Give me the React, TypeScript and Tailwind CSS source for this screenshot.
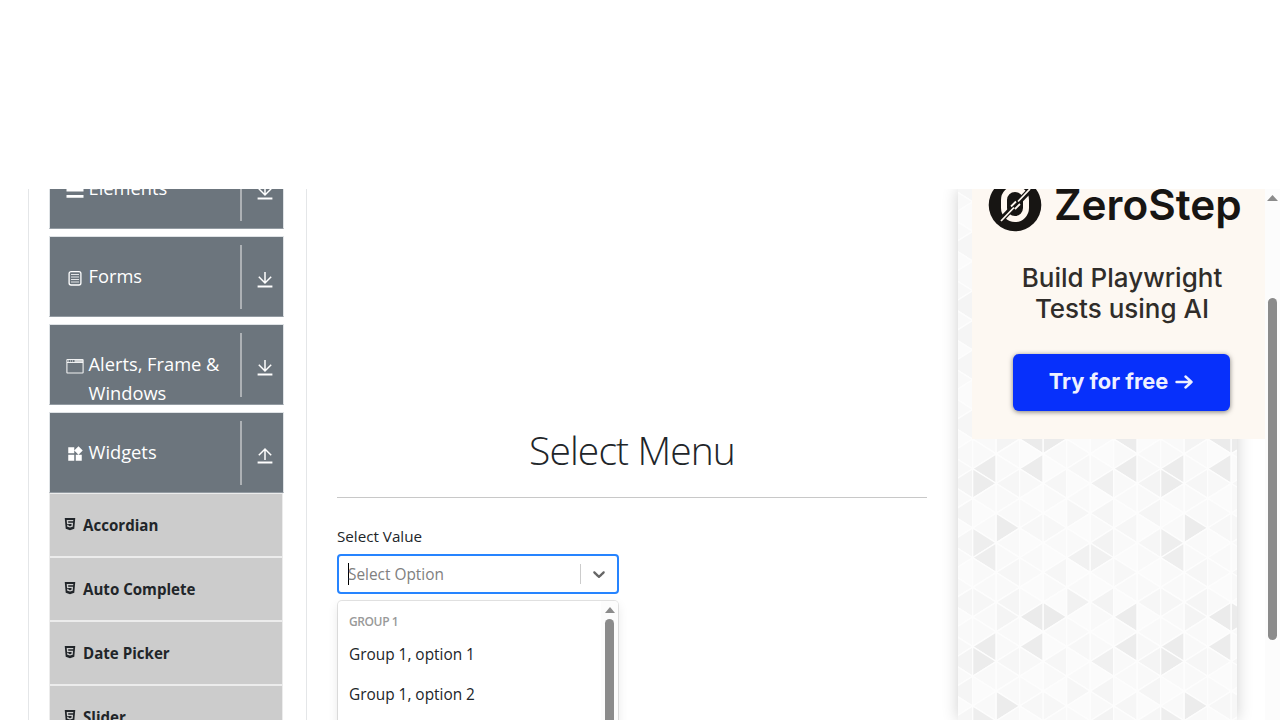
import React from "react";
import { MdWidgets } from "react-icons/md";
import { FaHtml5 } from "react-icons/fa";

function ElementsIcon() {
  return (
    <svg width="18" height="18" viewBox="0 0 18 18" fill="#fff">
      <path d="M.5 1.800h17v2.800H.5zM.5 7.800h17v2.800H.5zM.5 13.900h17v2.800H.5z" />
    </svg>
  );
}

function FormsIcon() {
  return (
    <svg width="18" height="18" viewBox="0 0 18 18" fill="none" stroke="#fff">
      <rect x="3.1" y="2.6" width="11.8" height="13.4" rx="2" strokeWidth="1.300" />
      <path d="M5 5.500h8M5 8h8M5 10.500h8M5 13h8" strokeWidth="1.200" opacity=".8" />
    </svg>
  );
}

function WindowIcon() {
  return (
    <svg width="18" height="18" viewBox="0 0 18 18" fill="none" stroke="#fff">
      <rect x=".9" y="2.500" width="16.200" height="13.500" rx=".6" strokeWidth="1.100" opacity=".9" />
      <path d="M1 5.500h16" strokeWidth="1" opacity=".9" />
      <path d="M2 4h1M4 4h1M6 4h1" strokeWidth="1.600" opacity=".55" />
      <path d="M8.500 4h8.500" strokeWidth="2" opacity=".7" />
    </svg>
  );
}

function Arrow({ up }: { up?: boolean }) {
  return (
    <svg width="16" height="18" viewBox="0 0 16 18" fill="none" stroke="#fff" strokeWidth="1.5">
      <path d={up ? "M8 13V2.500M1.800 8.200L8 2l6.200 6.200" : "M8 1v10.500M1.800 5.800L8 12l6.200-6.200"} />
      <path d="M.6 15.500h14.800" strokeWidth="2" />
    </svg>
  );
}

function Group({ icon, label, up }: { icon: React.ReactNode; label: string; up?: boolean }) {
  return (
    <div className="flex h-[81px] w-[235px] shrink-0 overflow-hidden border border-[#dfe3e6] border-b-[#939ba2] bg-[#6c757d] pt-2">
      <div className="flex h-16 w-[191.500px] border-r-2 border-[#adb1b5] pl-4">
        <span className="mt-[24px] h-[18px] w-[18px] shrink-0">{icon}</span>
        <span className="ml-[4.500px] mt-[16px] w-[150px] text-[18.300px] leading-[29px] text-white">{label}</span>
      </div>
      <span className="ml-[15.500px] mt-[26px]"><Arrow up={up} /></span>
    </div>
  );
}

function Item({ label }: { label: string }) {
  return (
    <div className="flex h-16 w-[234px] shrink-0 items-center border border-[#ececec] bg-[#ccc] pl-[13px] text-[#212529]">
      <FaHtml5 className="-mt-[2px] h-[14px] w-[14px]" />
      <span className="ml-[6px] text-[15.100px] font-bold">{label}</span>
    </div>
  );
}

const COL = 23.5;
const ROW = 14.83;
const shadedCells: [number, number, string][] = [
  [0, 0, "#ececec"], [0, 1, "#ececec"], [0, 5, "#eeeeee"], [0, 6, "#eeeeee"],
  [1, 4, "#ececec"], [2, 0, "#ececec"], [2, 10, "#ebebeb"], [3, 10, "#ebebeb"],
  [4, 9, "#f1f1f1"], [4, 6, "#f1f1f1"], [5, 1, "#f0f0f0"], [5, 6, "#f1f1f1"],
  [5, 5, "#f3f3f3"], [5, 9, "#f3f3f3"], [6, 0, "#ececec"], [6, 10, "#ececec"],
  [7, 1, "#f4f4f4"], [7, 0, "#f8f8f8"], [1, 10, "#f4f4f4"], [1, 1, "#f6f6f6"],
  [2, 1, "#f8f8f8"], [2, 4, "#f7f7f7"], [3, 4, "#f7f7f7"], [3, 7, "#f6f6f6"],
  [4, 3, "#f6f6f6"], [5, 3, "#f5f5f5"], [6, 4, "#f6f6f6"], [7, 3, "#f5f5f5"],
  [7, 5, "#f6f6f6"], [0, 9, "#f6f6f6"], [1, 9, "#f5f5f5"], [7, 9, "#f6f6f6"],
  [4, 0, "#f7f7f7"], [3, 1, "#f6f6f6"], [6, 7, "#f7f7f7"], [1, 7, "#f6f6f6"],
];

function TrianglePattern() {
  const cells: React.ReactNode[] = [];
  for (let c = -1; c < 12; c++) {
    for (let r = -20; r < 19; r++) {
      const col = (c + 8) % 8;
      const row = (r + 24) % 12;
      const found = shadedCells.find((d) => d[0] === col && d[1] === row);
      const fill = found ? found[2] : (col * 5 + row * 7) % 3 === 0 ? "#fbfbfb" : "#f9f9f9";
      const x = 14.7 + c * COL;
      const y = 279.7 + r * ROW;
      const left = (c + r) % 2 === 0;
      const apex = left ? x : x + COL;
      const base = left ? x + COL : x;
      cells.push(
        <polygon key={`${c}/${r}`} points={`${apex},${y} ${base},${y - ROW} ${base},${y + ROW}`} fill={fill} stroke="#fdfdfd" strokeWidth="1.300" />
      );
    }
  }
  return <svg className="block" width="279" height="531" viewBox="0 0 279 531">{cells}</svg>;
}

function Logo() {
  return (
    <svg width="54" height="54" viewBox="0 0 54 54">
      <circle cx="27" cy="27" r="26.300" fill="#171513" />
      <g fill="none" stroke="#fff8f1">
        <rect x="16" y="11" width="22" height="30" rx="11" strokeWidth="6" />
        <path d="M11 44L43 11" stroke="#171513" strokeWidth="5.500" />
        <path d="M13 43l13-13.500M23 28.500l5-5M27 31l5-5M30 23.500L42 11" strokeWidth="1.800" />
      </g>
    </svg>
  );
}

export default function App() {
  return (
    <div className="flex h-[720px] w-[1280px] flex-col overflow-hidden bg-white pt-[189px] font-['Open_Sans','Noto_Sans',sans-serif] text-[#212529]">
      <div className="flex h-[531px] overflow-hidden">
        <aside className="ml-7 flex h-[531px] w-[279px] shrink-0 flex-col border-x border-[#e4e6e8] pl-5">
          <div className="-mt-[41px] flex flex-col gap-[7px]">
            <Group icon={<ElementsIcon />} label="Elements" />
            <Group icon={<FormsIcon />} label="Forms" />
            <Group icon={<WindowIcon />} label="Alerts, Frame & Windows" />
            <Group icon={<MdWidgets className="h-[18px] w-[18px] text-white" />} label="Widgets" up />
          </div>
          <div className="flex flex-col">
            <Item label="Accordian" />
            <Item label="Auto Complete" />
            <Item label="Date Picker" />
            <Item label="Slider" />
          </div>
        </aside>

        <main className="ml-[30px] w-[590px] shrink-0 pt-[232px]">
          <h1 className="h-[75.500px] text-center text-[39px] font-light leading-[57px] tracking-[-0.900px]">Select Menu</h1>
          <hr className="h-[1.500px] border-0 bg-[#c8c8c8]" />
          <p className="mt-[26px] h-[24px] text-[15.200px] leading-[24px]">Select Value</p>
          <div className="mt-[6px] flex h-[40px] w-[282px] items-center rounded border-2 border-[#2684ff] pl-[9px]">
            <span className="h-[22px] w-px bg-black" />
            <span className="-ml-px w-[232px] pt-[2px] text-[15.400px] text-[#808080]">Select Option</span>
            <span className="h-5 w-px bg-[#ccc]" />
            <svg className="ml-2" width="20" height="20" viewBox="0 0 20 20" fill="#666">
              <path d="M4.516 7.548c0.436-0.446 1.043-0.481 1.576 0l3.908 3.747 3.908-3.747c0.533-0.481 1.141-0.446 1.574 0 0.436 0.445 0.408 1.197 0 1.615-0.406 0.418-4.695 4.502-4.695 4.502-0.217 0.223-0.502 0.335-0.787 0.335s-0.570-0.112-0.789-0.335c0 0-4.287-4.084-4.695-4.502s-0.436-1.170 0-1.615z" />
            </svg>
          </div>
          <div className="ml-px mt-[7px] flex h-[300px] w-[280px] justify-between rounded shadow-[0_0_0_1px_rgba(0,0,0,0.1),0_4px_11px_rgba(0,0,0,0.1)]">
            <div className="pl-[11px] pt-[11px]">
              <div className="h-[23px] text-[12px] font-semibold leading-[19px] tracking-[-0.400px] text-[#999]">GROUP 1</div>
              <div className="h-10 text-[15.400px] leading-[40px]">Group 1, option 1</div>
              <div className="h-10 text-[15.400px] leading-[40px]">Group 1, option 2</div>
            </div>
            <div className="flex w-[17px] flex-col items-center rounded-tr bg-[#fcfcfc] pt-[6px]">
              <svg width="10" height="6" viewBox="0 0 10 6" fill="#8b8b8b"><path d="M5 0l5 6H0z" /></svg>
              <div className="mt-[6px] h-[280px] w-[9px] rounded-full bg-[#8b8b8b]" />
            </div>
          </div>
        </main>

        <div className="relative ml-[31px] h-[531px] w-[279px] shrink-0 shadow-[0_0_15px_rgba(0,0,0,0.19)]">
          <TrianglePattern />
          <div className="absolute left-[14px] top-0 flex h-[250px] w-[293px] flex-col items-center overflow-hidden bg-[#fdf8f2] font-['Inter',sans-serif]">
            <div className="-mt-[12px] flex h-[56px] w-full items-center pl-[16px]">
              <Logo />
              <span className="ml-[12px] whitespace-nowrap text-[42.300px] font-semibold leading-[56px] text-[#171513]">ZeroStep</span>
            </div>
            <div className="mt-[29px] w-full pl-[7px] text-center text-[26px] font-medium leading-[31px] text-[#302d2a]">
              Build Playwright<br />Tests using AI
            </div>
            <div className="ml-[5px] mt-[30px] flex h-[57px] w-[217px] shrink-0 items-center justify-center rounded-[6px] bg-[#0730fb] pb-[2px] text-[21.800px] font-bold text-[#eef0ff] shadow-[0_1px_5px_rgba(0,0,0,0.5)]">
              <span>Try for free</span>
              <svg className="ml-[7px]" width="18" height="16" viewBox="0 0 18 16" fill="none" stroke="#eef0ff" strokeWidth="2.400" strokeLinecap="round" strokeLinejoin="round">
                <path d="M1.500 8h15M10.500 2.500L16.500 8l-6 5.500" />
              </svg>
            </div>
          </div>
        </div>

        <div className="z-10 ml-[28px] flex h-[531px] w-[15px] shrink-0 flex-col items-center bg-[#fcfcfc] pt-[6px]">
          <svg width="11" height="6" viewBox="0 0 11 6" fill="#8b8b8b"><path d="M5.500 0L11 6H0z" /></svg>
          <div className="mt-[97px] h-[342px] w-[9px] rounded-full bg-[#8b8b8b]" />
        </div>
      </div>
    </div>
  );
}
